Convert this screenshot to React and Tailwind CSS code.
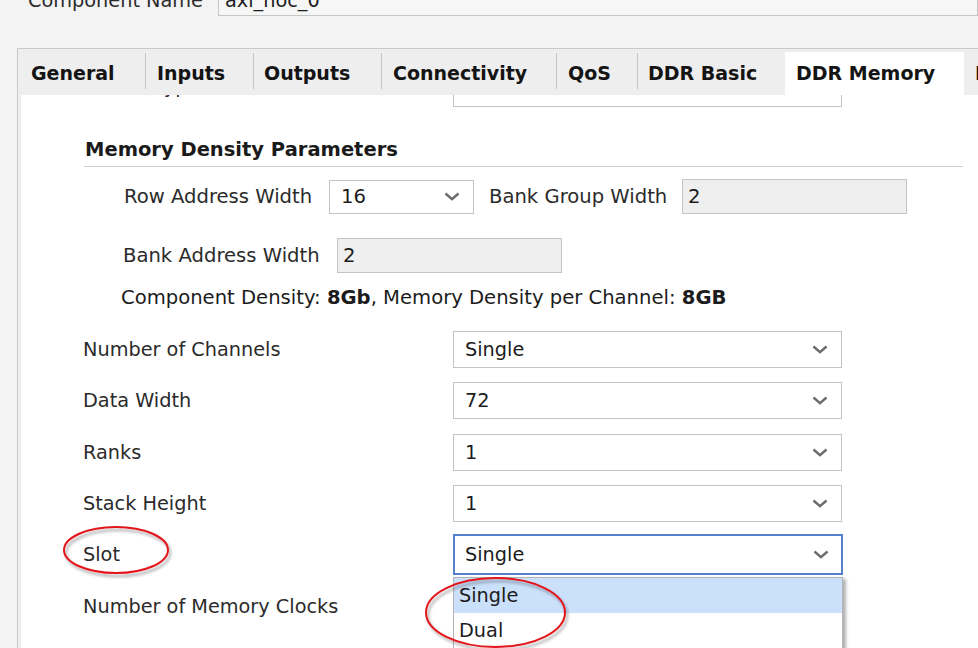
import React from "react";

function Chevron() {
  return (
    <svg width="16" height="9" viewBox="0 0 16 9" className="shrink-0">
      <polyline points="1.5,1.5 8,7.2 14.5,1.5" fill="none" stroke="#6b6b6b" strokeWidth="2.4" strokeLinejoin="miter" />
    </svg>
  );
}

function Combo({ value, w = "w-[389px]", h = "h-[37px]", focused = false, children }) {
  return (
    <div
      className={`relative flex items-center justify-between bg-white ${w} ${h} ${
        focused ? "border-2 border-[#5580cc] pl-[10px] pr-[12px]" : "border border-[#c3c3c3] pl-[11px] pr-[13px]"
      }`}
    >
      <span className="text-[#1c1c1c] leading-none">{value}</span>
      <Chevron />
      {children}
    </div>
  );
}

function Field({ value, w = "w-[225px]" }) {
  return (
    <div className={`flex items-center ${w} h-[35px] border border-[#c4c4c4] bg-[#efefef] pl-[5px]`}>
      <span className="text-[#1c1c1c] leading-none">{value}</span>
    </div>
  );
}

function Row({ label, value, mt }) {
  return (
    <div className={`flex items-center h-[37px] pl-[62px] ${mt}`}>
      <div className="w-[370px] leading-none text-[#2b2b2b]">{label}</div>
      <Combo value={value} />
    </div>
  );
}

const tabs = [
  { name: "General", w: "w-[127px]", pl: "pl-[13px]" },
  { name: "Inputs", w: "w-[107px]", pl: "pl-[11px]" },
  { name: "Outputs", w: "w-[127px]", pl: "pl-[10px]" },
  { name: "Connectivity", w: "w-[174px]", pl: "pl-[11px]" },
  { name: "QoS", w: "w-[80px]", pl: "pl-[11px]" },
  { name: "DDR Basic", w: "w-[147px]", pl: "pl-[10px]" },
];

export default function App() {
  return (
    <div className="relative w-[978px] h-[648px] overflow-hidden bg-[#f3f3f3] font-['DejaVu_Sans',sans-serif] text-[19.3px] text-[#2b2b2b]">
      {/* Component name row (cut off at top) */}
      <div className="h-[16px] overflow-hidden">
        <div className="flex items-center h-[34px] -mt-[18px]">
          <div className="w-[218px] pl-[28px] pt-[4px] leading-none text-[#2b2b2b]">Component Name</div>
          <div className="flex-1 h-[34px] border border-[#c6c6c6] bg-[#f6f6f6] flex items-center pl-[6px] pt-[4px]">
            <span className="leading-none text-[#1c1c1c]">axi_noc_0</span>
          </div>
        </div>
      </div>

      {/* Tabbed panel */}
      <div className="mt-[32px] ml-[17px] border-t border-l border-[#c9c9c9] bg-[#eeeeee]">
        <div className="flex items-end h-[46px] overflow-hidden text-[19px]">
          {tabs.map((t, i) => (
            <React.Fragment key={t.name}>
              <div className={`flex items-center h-[43px] shrink-0 ${t.w} ${t.pl} font-bold text-[#141414] leading-none`}>
                {t.name}
              </div>
              {i < tabs.length - 1 && <div className="w-px h-[36px] bg-[#c6c6c6] self-start mt-[4px] shrink-0" />}
            </React.Fragment>
          ))}
          <div className="flex items-center h-[43px] w-[179px] shrink-0 pl-[11px] bg-white font-bold text-[#141414] leading-none">
            DDR Memory
          </div>
          <div className="flex items-center h-[43px] shrink-0 pl-[11px] font-bold text-[#141414] leading-none whitespace-nowrap">
            DDR Address Mapping
          </div>
        </div>

        {/* Content */}
        <div className="ml-[3px] h-[553px] bg-white overflow-hidden">
          {/* partially scrolled row */}
          <div className="h-[12px] overflow-hidden">
            <div className="flex items-start h-[37px] -mt-[25px] pl-[62px]">
              <div className="w-[370px] leading-none text-[#2b2b2b] mt-[7px]">Device Type</div>
              <div className="w-[389px] h-[37px] border border-[#c3c3c3] bg-white" />
            </div>
          </div>

          <div className="mt-[32px] pl-[64px] h-[22px] leading-[22px] font-bold text-[#1a1a1a] text-[19.5px]">
            Memory Density Parameters
          </div>
          <div className="mt-[5px] ml-[63px] mr-[15px] h-px bg-[#cfcfcf]" />

          <div className="mt-[12px] flex items-center h-[35px] pl-[103px] text-[19.6px]">
            <div className="w-[205px] leading-none">Row Address Width</div>
            <Combo value="16" w="w-[145px]" h="h-[34px]" />
            <div className="ml-[15px] w-[193px] leading-none">Bank Group Width</div>
            <Field value="2" />
          </div>

          <div className="mt-[24px] flex items-center h-[35px] pl-[102px] text-[19.6px]">
            <div className="w-[214px] leading-none">Bank Address Width</div>
            <Field value="2" />
          </div>

          <div className="mt-[14px] h-[22px] leading-[22px] pl-[100px] text-[#1c1c1c] text-[19.6px]">
            Component Density: <span className="font-bold">8Gb</span>, Memory Density per Channel:{" "}
            <span className="font-bold">8GB</span>
          </div>

          <Row label="Number of Channels" value="Single" mt="mt-[22px]" />
          <Row label="Data Width" value="72" mt="mt-[14px]" />
          <Row label="Ranks" value="1" mt="mt-[15px]" />
          <Row label="Stack Height" value="1" mt="mt-[14px]" />

          <div className="mt-[12px] flex items-center h-[41px] pl-[62px]">
            <div className="w-[370px] leading-none">Slot</div>
            <Combo value="Single" w="w-[390px]" h="h-[41px]" focused />
          </div>

          <div className="mt-[13px] flex items-center h-[37px] pl-[62px]">
            <div className="w-[370px] leading-none">Number of Memory Clocks</div>
          </div>
        </div>
      </div>

      {/* Open dropdown list (overlay) */}
      <div className="absolute left-[453px] top-[577px] w-[390px] h-[80px] bg-white border-x border-t border-[#b4b4b4] shadow-[3px_2px_3px_rgba(0,0,0,0.3)]">
        <div className="h-[35px] bg-[#cbe0fb] flex items-center pl-[5px] leading-none text-[#1c1c1c]">Single</div>
        <div className="h-[35px] flex items-center pl-[5px] leading-none text-[#1c1c1c]">Dual</div>
      </div>

      {/* Red annotation ellipses */}
      <svg className="absolute left-0 top-0 pointer-events-none" width="978" height="648">
        <defs>
          <filter id="sh" x="-20%" y="-20%" width="140%" height="140%">
            <feDropShadow dx="2" dy="3" stdDeviation="1.6" floodColor="#000" floodOpacity="0.35" />
          </filter>
        </defs>
        <ellipse cx="116" cy="550" rx="52" ry="23" fill="none" stroke="#e3141b" strokeWidth="2" filter="url(#sh)" />
        <ellipse cx="495.5" cy="612.5" rx="69.5" ry="34.5" fill="none" stroke="#e3141b" strokeWidth="2" filter="url(#sh)" />
      </svg>
    </div>
  );
}
